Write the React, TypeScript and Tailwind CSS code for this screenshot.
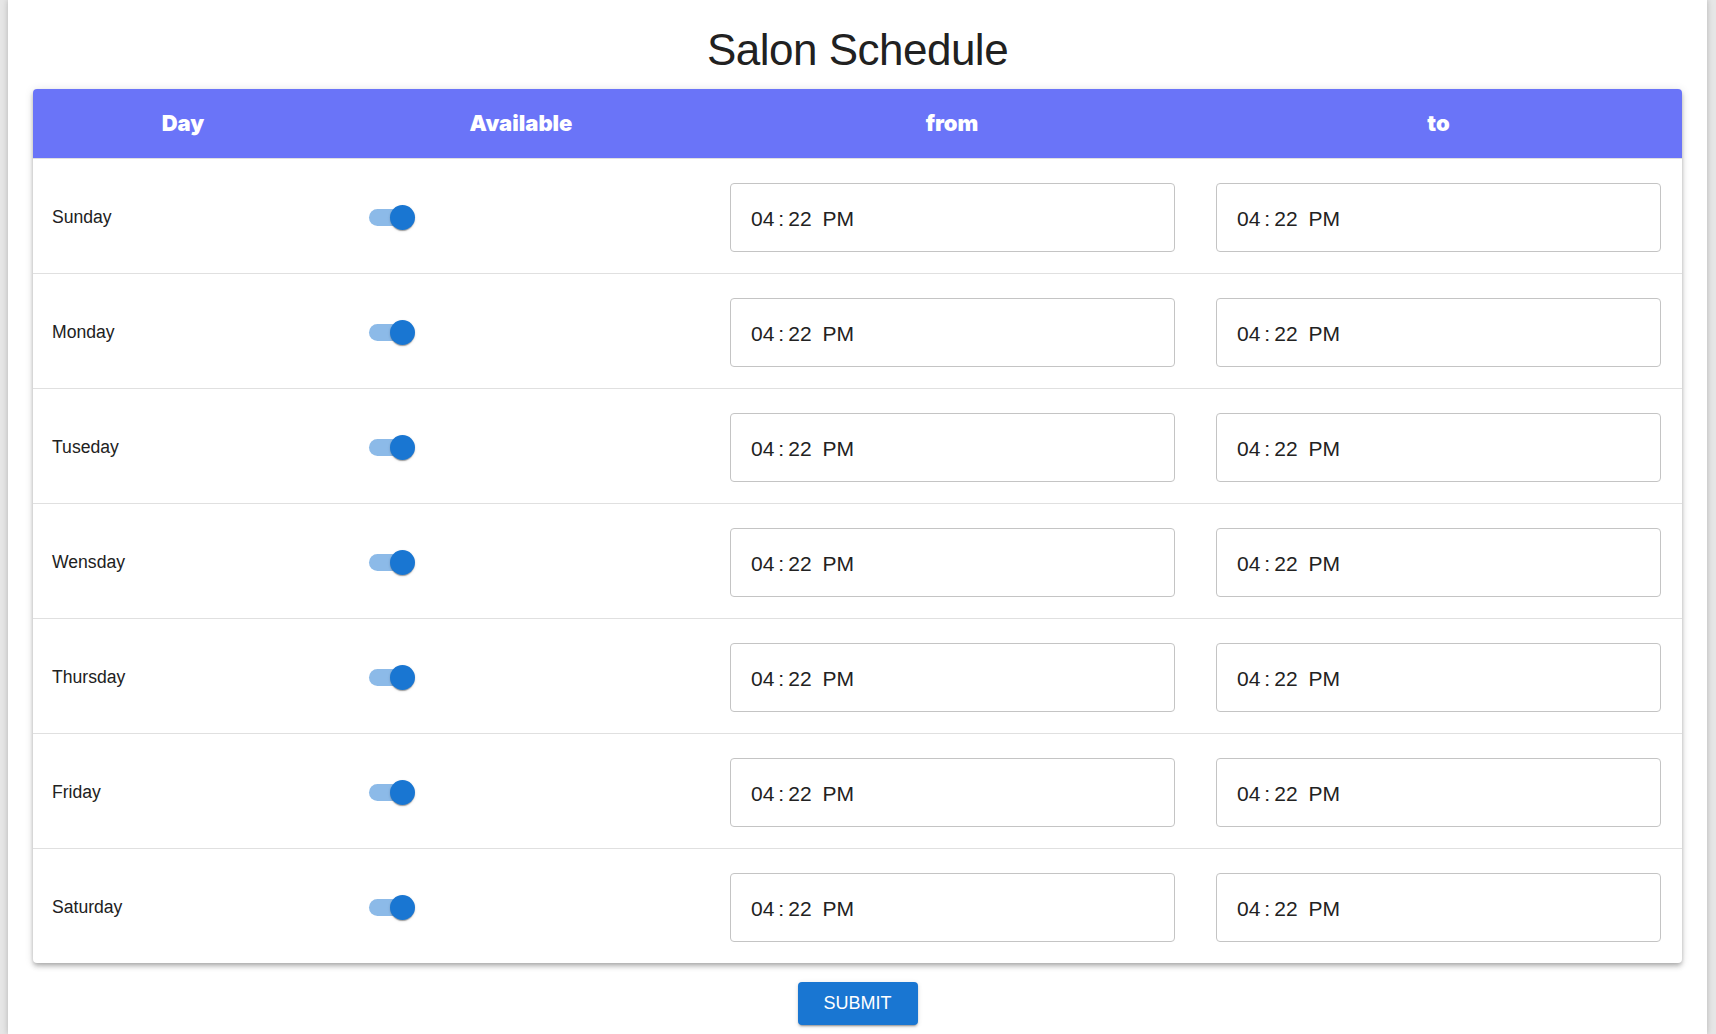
import React from "react";

const days = ["Sunday", "Monday", "Tuseday", "Wensday", "Thursday", "Friday", "Saturday"];

function Switch() {
  return (
    <div className="relative w-[46px] h-[25px]">
      <div className="absolute left-0 top-[4px] w-[41px] h-[17px] rounded-full bg-[#8cbae8]" />
      <div className="absolute left-[21px] top-0 w-[25px] h-[25px] rounded-full bg-[#1976d2] shadow-[0px_2px_1px_-1px_rgba(0,0,0,0.2),0px_1px_1px_0px_rgba(0,0,0,0.14),0px_1px_3px_0px_rgba(0,0,0,0.12)]" />
    </div>
  );
}

function TimeBox() {
  return (
    <div className="ml-[21px] w-[445px] h-[69px] rounded-[4px] border border-[#c4c4c4] bg-white flex items-center pl-[20px] pt-[3px] text-[21px] text-[#222222] font-['Liberation_Sans',Arial,sans-serif]">
      <span>04</span>
      <span className="ml-[4px]">:</span>
      <span className="ml-[4px]">22</span>
      <span className="ml-[11px]">PM</span>
    </div>
  );
}

export default function App() {
  return (
    <div className="min-h-[1034px] bg-[#e6e6e6] pl-[8px] pr-[9px] font-['Liberation_Sans',Arial,sans-serif]">
      <div className="bg-white min-h-[1034px] px-[25px] shadow-[0_0_6px_rgba(0,0,0,0.22)]">
        <h1 className="h-[89px] pt-[28px] text-center text-[44px] leading-[44px] tracking-[-0.5px] text-[#212121] font-normal">
          Salon Schedule
        </h1>
        <div className="bg-white rounded-[4px] overflow-hidden shadow-[0px_2px_4px_-1px_rgba(0,0,0,0.2),0px_4px_5px_0px_rgba(0,0,0,0.14),0px_1px_10px_0px_rgba(0,0,0,0.12)]">
          <div className="grid grid-cols-[300px_376px_486px_487px] h-[70px] bg-[#6a74f8] border-b border-[#e0e0e0] text-white text-[22px] font-black font-['Inter',sans-serif]">
            <div className="flex items-center justify-center">Day</div>
            <div className="flex items-center justify-center">Available</div>
            <div className="flex items-center justify-center">from</div>
            <div className="flex items-center justify-center">to</div>
          </div>
          {days.map((d, i) => (
            <div
              key={d}
              className={
                i < days.length - 1
                  ? "grid grid-cols-[300px_376px_486px_487px] pt-[24px] pb-[21px] border-b border-[#e0e0e0]"
                  : "grid grid-cols-[300px_376px_486px_487px] pt-[24px] pb-[21px]"
              }
            >
              <div className="h-[69px] flex items-center pl-[19px] text-[17.6px] text-[#212121]">{d}</div>
              <div className="h-[69px] flex items-center pl-[36px]">
                <Switch />
              </div>
              <div className="h-[69px] flex items-center">
                <TimeBox />
              </div>
              <div className="h-[69px] flex items-center">
                <TimeBox />
              </div>
            </div>
          ))}
        </div>
        <div className="flex justify-center pt-[19px]">
          <button className="w-[120px] h-[43px] rounded-[4px] bg-[#1976d2] text-white text-[18px] uppercase shadow-[0px_3px_1px_-2px_rgba(0,0,0,0.2),0px_2px_2px_0px_rgba(0,0,0,0.14),0px_1px_5px_0px_rgba(0,0,0,0.12)]">
            Submit
          </button>
        </div>
      </div>
    </div>
  );
}
